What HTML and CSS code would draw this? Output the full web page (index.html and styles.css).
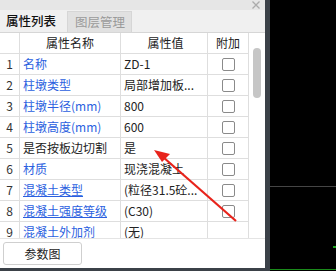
FILE: index.html
```html
<!DOCTYPE html>
<html>
<head>
<meta charset="utf-8">
<link rel="stylesheet" href="styles.css">
</head>
<body>
<div class="screen">
  <div class="main">
    <div class="panel">
      <div class="titlebar"><svg class="close" width="8" height="8" viewBox="0 0 8 8"><path d="M0.5 0.5 L7.5 7.5 M7.5 0.5 L0.5 7.5" stroke="#ababab" stroke-width="1.3"/></svg></div>
      <div class="tabbar">
        <div class="tab active">属性列表</div>
        <div class="tab inactive">图层管理</div>
      </div>
      <div class="tablewrap">
        <div class="grid">
          <div class="row head">
            <div class="c num"></div>
            <div class="c name center">属性名称</div>
            <div class="c val center">属性值</div>
            <div class="c add center">附加</div>
          </div>
          <div class="row"><div class="c num">1</div><div class="c name blue">名称</div><div class="c val">ZD-1</div><div class="c add"><span class="cb"></span></div></div>
          <div class="row"><div class="c num">2</div><div class="c name blue">柱墩类型</div><div class="c val">局部增加板...</div><div class="c add"><span class="cb"></span></div></div>
          <div class="row"><div class="c num">3</div><div class="c name blue">柱墩半径(mm)</div><div class="c val">800</div><div class="c add"><span class="cb"></span></div></div>
          <div class="row"><div class="c num">4</div><div class="c name blue">柱墩高度(mm)</div><div class="c val">600</div><div class="c add"><span class="cb"></span></div></div>
          <div class="row"><div class="c num">5</div><div class="c name">是否按板边切割</div><div class="c val">是</div><div class="c add"><span class="cb"></span></div></div>
          <div class="row"><div class="c num">6</div><div class="c name blue">材质</div><div class="c val">现浇混凝土</div><div class="c add"><span class="cb"></span></div></div>
          <div class="row"><div class="c num">7</div><div class="c name blue ul">混凝土类型</div><div class="c val">(粒径31.5砼...</div><div class="c add"><span class="cb"></span></div></div>
          <div class="row"><div class="c num">8</div><div class="c name blue ul">混凝土强度等级</div><div class="c val">(C30)</div><div class="c add"><span class="cb"></span></div></div>
          <div class="row"><div class="c num">9</div><div class="c name blue ul">混凝土外加剂</div><div class="c val">(无)</div><div class="c add"></div></div>
        </div>
        <div class="scrollbar"><div class="thumb"></div></div>
      </div>
      <div class="btnbar"><button class="btn">参数图</button></div>
    </div>
    <div class="strip"></div>
    <div class="canvas">
      <div class="hline"></div>
      <div class="gmark"></div>
      <div class="gline"></div>
    </div>
  </div>
  <div class="bottombar"></div>
  <svg class="arrow" width="336" height="271" viewBox="0 0 336 271">
    <line x1="236" y1="221" x2="163" y2="157" stroke="#e8231b" stroke-width="2.2"/>
    <polygon points="154,150 170,154 162,162" fill="#e8231b"/>
  </svg>
</div>
</body>
</html>
```

FILE: styles.css
```css
* { box-sizing: border-box; }
html, body { margin: 0; padding: 0; }
body { background: #000; font-family: "Noto Sans CJK SC", "Microsoft YaHei", sans-serif; font-size: 12px; color: #222; }
.screen { position: relative; width: 336px; height: 271px; overflow: hidden; background: #000; }
.main { display: flex; height: 268px; }
.panel { width: 265px; display: flex; flex-direction: column; background: #fff; }
.titlebar { height: 10px; background: #e6e6e6; display: flex; justify-content: flex-end; align-items: center; padding-right: 5px; }
.close { display: block; }
.tabbar { height: 23px; background: #f0f0f0; border-bottom: 1px solid #d6d6d6; display: flex; align-items: flex-end; }
.tab { height: 21px; line-height: 20px; font-size: 12.5px; white-space: nowrap; }
.tab.active { padding: 0 5px 0 6px; color: #111; font-weight: 500; }
.tab.inactive { margin-left: 6px; width: 65px; background: #e1e1e1; color: #9a9a9a; border: 1px solid #d6d6d6; border-bottom: none; padding-left: 7px; }
.tablewrap { display: flex; height: 205px; }
.grid { width: 249px; overflow: hidden; }
.row { display: grid; grid-template-columns: 20px 101px 87px 41px; height: 21px; }
.c { border-right: 1px solid #dedede; border-bottom: 1px solid #dedede; height: 21px; line-height: 20px; white-space: nowrap; overflow: hidden; padding-left: 3px; font-size: 12px; }
.c.num { text-align: center; padding-left: 0; color: #333; }
.c.center { text-align: center; padding-left: 0; }
.c.val { padding-left: 3px; text-overflow: clip; }
.c.add { display: flex; align-items: center; justify-content: center; padding-left: 0; }
.blue { color: #2b5fe0; }
.ul { text-decoration: underline; text-decoration-color: #2b5fe0; }
.cb { width: 13px; height: 13px; border: 1px solid #8a8a8a; border-radius: 2px; background: #fff; }
.scrollbar { width: 16px; background: #fff; padding-top: 15px; padding-left: 4px; }
.thumb { width: 8px; height: 50px; background: #c6c6c6; border-radius: 4px; }
.btnbar { flex: 1; background: #fff; padding: 3px 0 0 3px; border-top: 1px solid #e4e4e4; }
.btn { width: 79px; height: 23px; background: #fff; border: 1px solid #cfcfcf; border-radius: 3px; font-family: "Noto Sans CJK SC", sans-serif; font-size: 12px; color: #222; padding: 0; }
.strip { width: 5px; background: #3b4148; }
.canvas { flex: 1; background: #000; position: relative; }
.hline { position: absolute; left: 0; right: 0; top: 186px; height: 1px; background: #454545; }
.gmark { position: absolute; right: 0; top: 246px; width: 3px; height: 2px; background: #1fa31f; }
.gline { position: absolute; left: 0; right: 0; bottom: -2px; height: 1px; background: #1a8a1a; }
.bottombar { height: 3px; width: 270px; background: #3b4148; }
.arrow { position: absolute; left: 0; top: 0; pointer-events: none; }
```
